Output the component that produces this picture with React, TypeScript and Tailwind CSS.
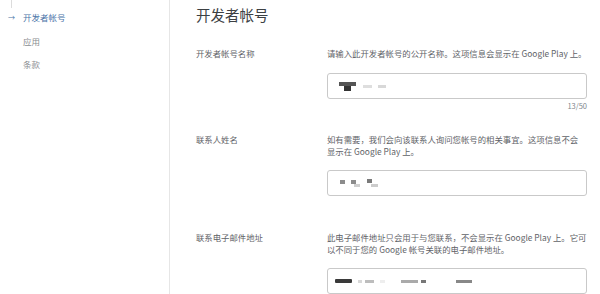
import React from "react";

const font = { fontFamily: '"Noto Sans CJK SC", "Noto Sans", sans-serif' };

function Blob({ className }: { className: string }) {
  return <span className={`block shrink-0 blur-[0.5px] ${className}`} />;
}

function Field({ children }: { children: React.ReactNode }) {
  return (
    <div className="flex h-[26px] w-[260px] items-center rounded-[3px] border border-[#c9c9c9] bg-white pl-[11px]">
      {children}
    </div>
  );
}

export default function App() {
  return (
    <div className="flex h-[294px] w-[600px] overflow-hidden bg-white" style={font}>
      {/* side nav */}
      <aside className="relative w-[170px] shrink-0 border-r border-[#e6e6e6]">
        <div className="absolute left-[11px] top-0 h-[8px] w-px bg-[#dcdcdc]" />
        <nav className="flex flex-col pt-[11px] text-[8.5px] leading-[12px]">
          <div className="flex items-center text-[#4b74a8]">
            <span className="w-[23px] pl-[8px] text-[7px] leading-[12px]">→</span>
            <span>开发者帐号</span>
          </div>
          <div className="mt-[11.5px] pl-[23px] text-[#8a8d91]">应用</div>
          <div className="mt-[11px] pl-[23px] text-[#8a8d91]">条款</div>
        </nav>
      </aside>

      {/* main */}
      <main className="flex-1 pl-[26px]">
        <h1 className="mt-[5px] text-[14.5px] leading-[20px] text-[#3c4043]">开发者帐号</h1>

        {/* row 1 */}
        <div className="mt-[22px] grid grid-cols-[131px_260px] text-[8.4px] leading-[12px] text-[#5f6368]">
          <div>开发者帐号名称</div>
          <div>
            <p>请输入此开发者帐号的公开名称。这项信息会显示在 Google Play 上。</p>
            <div className="mt-[14px]">
              <Field>
                <span className="relative block h-[9px] w-[17px] shrink-0">
                  <Blob className="absolute left-0 top-0 h-[4px] w-[17px] bg-[#555]" />
                  <Blob className="absolute left-[5px] top-[4px] h-[5px] w-[7px] bg-[#333]" />
                </span>
                <Blob className="ml-[7px] h-[3px] w-[9px] bg-[#dedede]" />
                <Blob className="ml-[6px] h-[3px] w-[8px] bg-[#d8d8d8]" />
              </Field>
            </div>
            <div className="mt-[2px] text-right text-[7.5px] leading-[10px] text-[#80868b]">13/50</div>
          </div>
        </div>

        {/* row 2 */}
        <div className="mt-[22px] grid grid-cols-[131px_260px] text-[8.4px] leading-[12px] text-[#5f6368]">
          <div>联系人姓名</div>
          <div>
            <p>
              如有需要，我们会向该联系人询问您帐号的相关事宜。这项信息不会
              <br />
              显示在 Google Play 上。
            </p>
            <div className="mt-[13px]">
              <Field>
                <span className="relative block h-[9px] w-[45px] shrink-0">
                  <Blob className="absolute left-[1px] top-[1px] h-[4px] w-[5px] bg-[#8c8c8c]" />
                  <Blob className="absolute left-[12px] top-[1px] h-[4px] w-[5px] bg-[#8c8c8c]" />
                  <Blob className="absolute left-[15px] top-[5px] h-[3px] w-[6px] bg-[#cfcfcf]" />
                  <Blob className="absolute left-[28px] top-0 h-[4px] w-[5px] bg-[#7a7a7a]" />
                  <Blob className="absolute left-[32px] top-[5px] h-[3px] w-[7px] bg-[#cccccc]" />
                </span>
              </Field>
            </div>
          </div>
        </div>

        {/* row 3 */}
        <div className="mt-[35px] grid grid-cols-[131px_260px] text-[8.4px] leading-[12px] text-[#5f6368]">
          <div>联系电子邮件地址</div>
          <div>
            <p>
              此电子邮件地址只会用于与您联系，不会显示在 Google Play 上。它可
              <br />
              以不同于您的 Google 帐号关联的电子邮件地址。
            </p>
            <div className="mt-[13px]">
              <Field>
                <span className="flex items-center">
                  <Blob className="-ml-[4px] h-[4px] w-[17px] rounded-[1px] bg-[#3a3a3a]" />
                  <Blob className="ml-[6px] h-[3px] w-[4px] bg-[#d8d8d8]" />
                  <Blob className="ml-[3px] h-[3px] w-[9px] bg-[#bdbdbd]" />
                  <Blob className="ml-[6px] h-[3px] w-[5px] bg-[#eeeeee]" />
                  <Blob className="ml-[16px] h-[3px] w-[17px] bg-[#aaa]" />
                  <Blob className="ml-[3px] h-[3px] w-[5px] bg-[#777]" />
                  <Blob className="ml-[30px] h-[3px] w-[16px] bg-[#888]" />
                </span>
              </Field>
            </div>
          </div>
        </div>
      </main>
    </div>
  );
}
